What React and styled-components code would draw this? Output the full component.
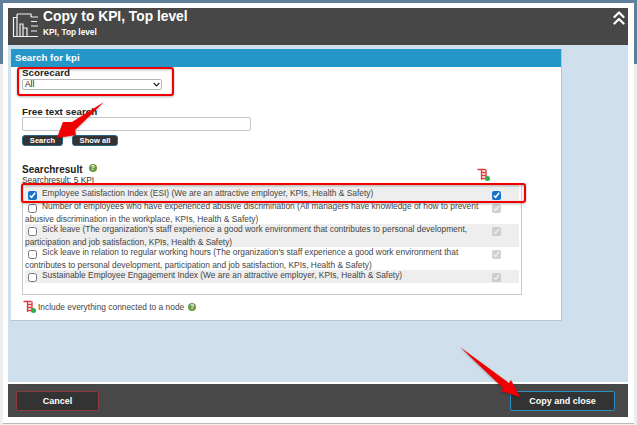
import styled, { createGlobalStyle } from "styled-components";
import { ChevronsUp } from "lucide-react";

const GlobalStyle = createGlobalStyle`
  html, body {
    margin: 0;
    padding: 0;
    background: #eeeeee;
  }
  * {
    box-sizing: border-box;
  }
`;

const Page = styled.div`
  position: relative;
  width: 637px;
  height: 425px;
  overflow: hidden;
  padding: 3px 3px 1px 3px;
  font-family: "Liberation Sans", Arial, sans-serif;
  background: linear-gradient(#5f7f9a 0 64px, #eeeeee 64px);
`;

const Modal = styled.div`
  height: 421px;
  background: #ffffff;
  border-bottom: 1px solid #bbbbbb;
  padding: 5px 6px 6px 5px;
  display: flex;
  flex-direction: column;
`;

const Header = styled.header`
  height: 37px;
  flex: none;
  background: #474747;
  display: flex;
  padding: 1px 4px 0 4px;
  color: #ffffff;
`;

const HeaderIcon = styled.svg`
  width: 27px;
  height: 26px;
  margin-top: 4px;
  flex: none;
`;

const Titles = styled.div`
  margin-left: 4px;
  flex: 1;
`;

const Title = styled.div`
  font-size: 13.8px;
  font-weight: bold;
  line-height: 15px;
`;

const SubTitle = styled.div`
  font-size: 8.3px;
  font-weight: bold;
  line-height: 10px;
  margin-top: 3px;
`;

const CollapseIcon = styled(ChevronsUp)`
  width: 22px;
  height: 22px;
  flex: none;
  margin: -2px -6px 0 0;
`;

const Content = styled.main`
  flex: 1;
  background: #cfe0ec;
  padding: 4px 66px 0 3px;
`;

const Panel = styled.section`
  height: 272px;
  background: #ffffff;
  border-right: 1px solid #b9c6d1;
  border-bottom: 1px solid #b9c6d1;
`;

const PanelTitle = styled.h2`
  margin: 0;
  height: 18px;
  padding: 0 4px;
  background: #2596c8;
  color: #ffffff;
  font-size: 9.7px;
  font-weight: bold;
  line-height: 18px;
`;

const PanelBody = styled.div`
  padding: 0 11px;
  color: #222222;
`;

const FieldLabel = styled.div`
  font-size: 9.8px;
  font-weight: bold;
  line-height: 10px;
  margin-top: ${(p) => p.$top}px;
`;

const Select = styled.select`
  display: block;
  width: 140px;
  height: 11px;
  padding: 0 0 1px 2px;
  margin: 1px 0 0 0;
  font-family: inherit;
  font-size: 8.4px;
  line-height: 9px;
  color: #222222;
  appearance: none;
  background: #ffffff url("data:image/svg+xml,%3Csvg xmlns='http://www.w3.org/2000/svg' width='7' height='5'%3E%3Cpath d='M.7 1l2.8 2.8L6.3 1' fill='none' stroke='%23222' stroke-width='1.2'/%3E%3C/svg%3E") no-repeat right 1px center;
  border: 1px solid #b5b5b5;
  border-radius: 2px;
`;

const TextInput = styled.input`
  display: block;
  width: 229px;
  height: 14px;
  padding: 0 2px;
  margin: 0;
  background: #ffffff;
  border: 1px solid #c4c4c4;
  border-radius: 2px;
`;

const ButtonRow = styled.div`
  display: flex;
  gap: 9px;
  margin-top: 4px;
`;

const SmallButton = styled.button`
  width: ${(p) => p.$width}px;
  height: 11px;
  padding: 0;
  background: #333333;
  color: #ffffff;
  border: 1px solid #2c6685;
  border-radius: 3px;
  font-family: inherit;
  font-size: 7.6px;
  font-weight: bold;
  line-height: 9px;
`;

const ResultHead = styled.div`
  display: flex;
  align-items: flex-start;
  height: 10px;
  margin-top: 19px;
`;

const ResultTitle = styled.div`
  font-size: 10px;
  font-weight: bold;
  line-height: 10px;
`;

const Help = styled.span`
  display: inline-block;
  flex: none;
  width: 8px;
  height: 8px;
  margin: ${(p) => p.$margin};
  border-radius: 50%;
  background: #6d9a45;
  color: #ffffff;
  font-size: 7px;
  font-weight: bold;
  line-height: 8px;
  text-align: center;
`;

const TreeIcon = styled.svg`
  width: 13px;
  height: 14px;
  flex: none;
  margin: ${(p) => p.$margin};
`;

const ResultCount = styled.div`
  font-size: 8.4px;
  line-height: 10px;
  color: #333333;
`;

const List = styled.div`
  width: 500px;
  height: 110px;
  padding: 0 2px;
  border: 1px solid #cccccc;
  border-top: 0;
`;

const Row = styled.div`
  display: flex;
  padding-top: ${(p) => (p.$first ? 3 : 0)}px;
  background: ${(p) => (p.$shaded ? "#eeeeee" : "#ffffff")};
  color: #444444;
  font-size: 8.4px;
  line-height: 10px;
`;

const RowText = styled.div`
  width: 467px;
  flex: none;
`;

const Check = styled.input`
  width: 9px;
  height: 9px;
  margin: 3px 5px 1px 3px;
  vertical-align: top;
  accent-color: #1673cc;
`;

const NodeCheck = styled.input`
  width: 9px;
  height: 9px;
  margin: 3px 0 0 0;
  flex: none;
  accent-color: #1673cc;
`;

const IncludeRow = styled.div`
  display: flex;
  align-items: center;
  margin-top: 4px;
  color: #444444;
  font-size: 8.4px;
  line-height: 14px;
`;

const Footer = styled.footer`
  height: 33px;
  flex: none;
  margin-top: 2px;
  background: #484848;
  display: flex;
  justify-content: space-between;
  padding: 7px 13px 0 8px;
`;

const FooterButton = styled.button`
  width: ${(p) => p.$width}px;
  height: 20px;
  padding: 0;
  background: #333333;
  color: #ffffff;
  border: 1px solid ${(p) => p.$edge};
  border-radius: 2px;
  font-family: inherit;
  font-size: 9px;
  font-weight: bold;
`;

// red annotations drawn on top of the screenshot
const Overlay = styled.svg`
  position: absolute;
  left: 0;
  top: 0;
  width: 637px;
  height: 425px;
  pointer-events: none;
  filter: drop-shadow(0 1px 1px rgba(0, 0, 0, 0.3));
`;

function NodeTree({ margin }) {
  return (
    <TreeIcon viewBox="0 0 13 14" $margin={margin}>
      <path d="M0.5 1.5H8.5M4.5 1.5V12M9 1.5V12M4.5 4.5H9M4.5 7.5H9M4.5 10.5H9" stroke="#e0383c" strokeWidth="1.3" fill="none" />
      <circle cx="10.5" cy="10.5" r="2.5" fill="#27b04b" />
    </TreeIcon>
  );
}

const rows = [
  {
    text: "Employee Satisfaction Index (ESI) (We are an attractive employer, KPIs, Health & Safety)",
    checked: true,
    shaded: true,
    first: true,
  },
  {
    text: "Number of employees who have experienced abusive discrimination (All managers have knowledge of how to prevent abusive discrimination in the workplace, KPIs, Health & Safety)",
  },
  {
    text: "Sick leave (The organization's staff experience a good work environment that contributes to personal development, participation and job satisfaction, KPIs, Health & Safety)",
    shaded: true,
  },
  {
    text: "Sick leave in relation to regular working hours (The organization's staff experience a good work environment that contributes to personal development, participation and job satisfaction, KPIs, Health & Safety)",
  },
  {
    text: "Sustainable Employee Engagement Index (We are an attractive employer, KPIs, Health & Safety)",
    shaded: true,
  },
];

export default function App() {
  return (
    <Page>
      <GlobalStyle />
      <Modal>
        <Header>
          <HeaderIcon viewBox="0 0 27 26" fill="none" stroke="#f2f2f2" strokeWidth="1.2">
            <path d="M5 4.5H1.5V23.5H13" />
            <path d="M5 1V23.5M5 1H19V4M19 23.5H13M19 4H26M19 8.5H25M19 13H26M19 18H25M19 23.5H26" />
            <path d="M8 23V11H11V23M11 23V15H15V23" />
          </HeaderIcon>
          <Titles>
            <Title>Copy to KPI, Top level</Title>
            <SubTitle>KPI, Top level</SubTitle>
          </Titles>
          <CollapseIcon color="#ffffff" strokeWidth={2.4} />
        </Header>
        <Content>
          <Panel>
            <PanelTitle>Search for kpi</PanelTitle>
            <PanelBody>
              <FieldLabel $top={1}>Scorecard</FieldLabel>
              <Select defaultValue="All">
                <option>All</option>
              </Select>
              <FieldLabel $top={17}>Free text search</FieldLabel>
              <TextInput type="text" />
              <ButtonRow>
                <SmallButton $width={41}>Search</SmallButton>
                <SmallButton $width={46}>Show all</SmallButton>
              </ButtonRow>
              <ResultHead>
                <ResultTitle>Searchresult</ResultTitle>
                <Help $margin="-1px 0 0 6px">?</Help>
                <NodeTree margin="3px 0 0 380px" />
              </ResultHead>
              <ResultCount>Searchresult: 5 KPI</ResultCount>
              <List>
                {rows.map((row) => (
                  <Row key={row.text} $shaded={row.shaded} $first={row.first}>
                    <RowText>
                      <Check type="checkbox" defaultChecked={row.checked} />
                      {row.text}
                    </RowText>
                    <NodeCheck type="checkbox" defaultChecked disabled={!row.checked} />
                  </Row>
                ))}
              </List>
              <IncludeRow>
                <NodeTree margin="1px 2px 0 1px" />
                Include everything connected to a node
                <Help $margin="0 0 0 4px">?</Help>
              </IncludeRow>
            </PanelBody>
          </Panel>
        </Content>
        <Footer>
          <FooterButton $width={83} $edge="#8c3a3d">Cancel</FooterButton>
          <FooterButton $width={105} $edge="#2b8fc0">Copy and close</FooterButton>
        </Footer>
      </Modal>
      <Overlay viewBox="0 0 637 425">
        <rect x="18" y="68" width="155" height="27" rx="2" fill="none" stroke="#f00000" strokeWidth="2" />
        <rect x="22" y="184" width="503" height="18" rx="2" fill="none" stroke="#f00000" strokeWidth="2" />
        <path d="M104 102L72 122L63 122L57 138L76 135L75 130Z" fill="#f00000" />
        <path d="M460 347L509 383L511 380L520 397L501 391L503 388Z" fill="#f00000" />
      </Overlay>
    </Page>
  );
}
